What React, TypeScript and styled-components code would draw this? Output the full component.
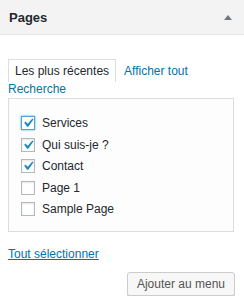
import React from "react";
import styled, { createGlobalStyle } from "styled-components";

const Global = createGlobalStyle`
  html, body { margin: 0; padding: 0; background: #fff; }
  body { font-family: "Liberation Sans", Arial, sans-serif; font-size: 12px; color: #32373c; }
`;

const Panel = styled.div`
  width: 244px;
  background: #fff;
`;

const Header = styled.div`
  height: 35px;
  background: #f3f3f3;
  border-bottom: 1px solid #e5e5e5;
  display: flex;
  align-items: center;
  justify-content: space-between;
  padding: 0 10px 0 9px;
  box-sizing: border-box;
`;

const Title = styled.h3`
  margin: 0;
  font-size: 13px;
  font-weight: bold;
  color: #23282d;
`;

const Arrow = styled.span`
  width: 0;
  height: 0;
  border-left: 4px solid transparent;
  border-right: 4px solid transparent;
  border-bottom: 5px solid #72777c;
  margin-right: 2px;
`;

const Body = styled.div`
  padding: 24px 10px 0 8px;
`;

const Tabs = styled.ul`
  margin: 0;
  padding: 0;
  list-style: none;
  line-height: 14px;
`;

const Tab = styled.li<{ $active?: boolean }>`
  display: inline-block;
  margin-right: 8px;
  ${(p) =>
    p.$active
      ? `
    border: 1px solid #dddddd;
    border-bottom: none;
    padding: 4px 6px 4px 6px;
    color: #23282d;
  `
      : `
    color: #0073aa;
  `}
`;

const Box = styled.div`
  margin-top: 2px;
  border: 1px solid #dddddd;
  background: #fdfdfd;
  padding: 16px 11px 14px 11px;
  display: flex;
  flex-direction: column;
  gap: 5.5px;
`;

const Row = styled.label`
  display: flex;
  align-items: center;
  gap: 7px;
  height: 16px;
  color: #23282d;
`;

const Check = styled.span<{ $focus?: boolean }>`
  width: 14px;
  height: 14px;
  margin-left: 1px;
  box-sizing: border-box;
  border: 1px solid ${(p) => (p.$focus ? "#5b9dd9" : "#b4b9be")};
  box-shadow: ${(p) =>
    p.$focus ? "0 0 2px rgba(30,140,190,0.8)" : "inset 0 1px 2px rgba(0,0,0,0.1)"};
  background: #fff;
  display: flex;
  align-items: center;
  justify-content: center;
  overflow: visible;
`;

const TickSvg = styled.svg`
  flex: none;
  margin: -2px;
`;

const SelectAll = styled.a`
  display: inline-block;
  margin-top: 15px;
  line-height: 14px;
  color: #0073aa;
  text-decoration: underline;
`;

const Footer = styled.div`
  display: flex;
  justify-content: flex-end;
  margin-top: 11px;
  margin-right: -1px;
`;

const Button = styled.button`
  font-family: "Liberation Sans", Arial, sans-serif;
  font-size: 12px;
  color: #555;
  background: #f7f7f7;
  border: 1px solid #cccccc;
  border-radius: 3px;
  box-shadow: 0 1px 0 #cccccc;
  height: 24px;
  padding: 0 9px 1px;
  line-height: 22px;
`;

const Tick = () => (
  <TickSvg width="18" height="18" viewBox="0 0 20 20">
    <path d="M14.83 4.89l1.34.94-5.81 8.38H9.02L5.78 9.67l1.34-1.25 2.57 2.4z" fill="#1e8cbe" />
  </TickSvg>
);

const items = [
  { label: "Services", checked: true, focus: true },
  { label: "Qui suis-je ?", checked: true },
  { label: "Contact", checked: true },
  { label: "Page 1", checked: false },
  { label: "Sample Page", checked: false },
];

export default function App() {
  return (
    <>
      <Global />
      <Panel>
        <Header>
          <Title>Pages</Title>
          <Arrow />
        </Header>
        <Body>
          <Tabs>
            <Tab $active>Les plus récentes</Tab>
            <Tab>Afficher tout</Tab>
            <Tab>Recherche</Tab>
          </Tabs>
          <Box>
            {items.map((it) => (
              <Row key={it.label}>
                <Check $focus={it.focus}>{it.checked && <Tick />}</Check>
                {it.label}
              </Row>
            ))}
          </Box>
          <SelectAll href="#">Tout sélectionner</SelectAll>
          <Footer>
            <Button>Ajouter au menu</Button>
          </Footer>
        </Body>
      </Panel>
    </>
  );
}
